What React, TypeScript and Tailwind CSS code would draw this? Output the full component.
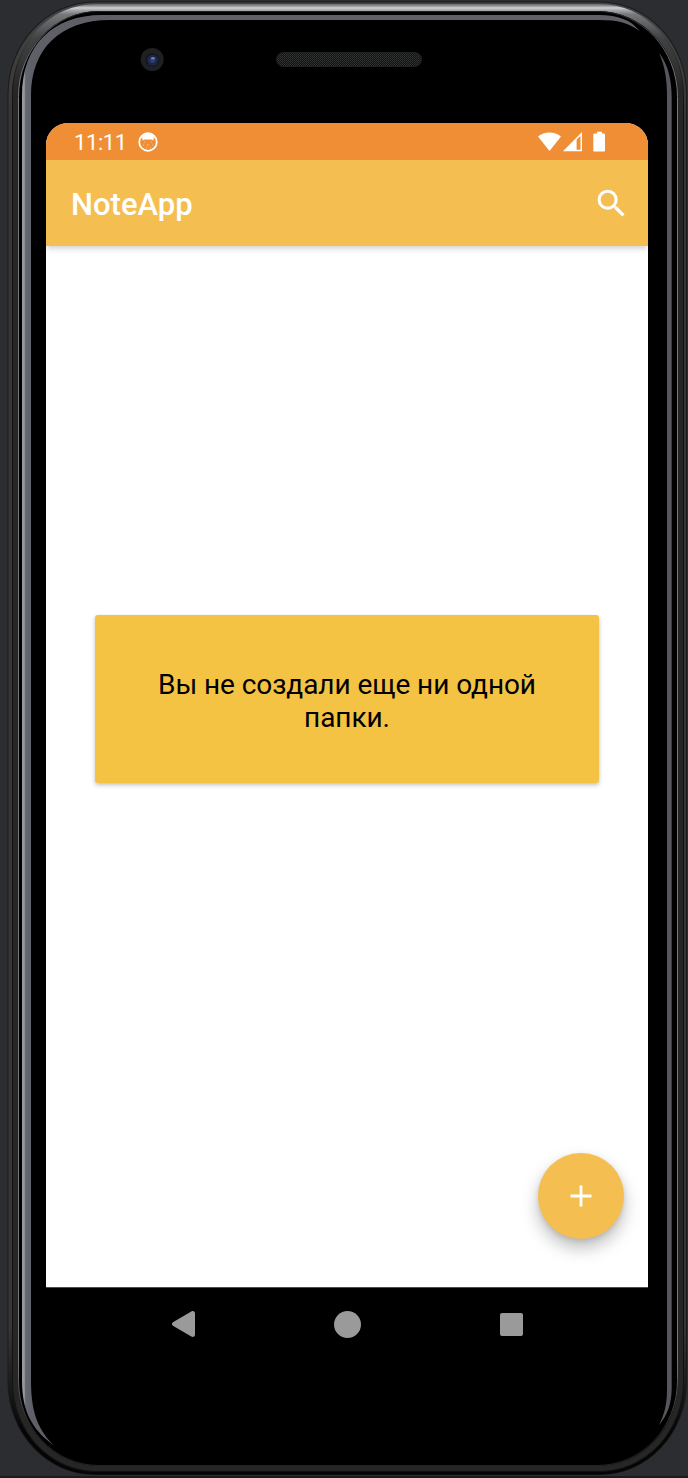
import React from "react";

function PhoneFrame() {
  return (
    <svg className="absolute inset-0 h-[1478px] w-[688px]" viewBox="0 0 688 1478" fill="none" aria-hidden="true">
      <defs>
        <linearGradient id="rim" gradientUnits="userSpaceOnUse" x1="0" y1="4" x2="0" y2="90">
          <stop offset="0" stopColor="#66676a" />
          <stop offset="0.025" stopColor="#98999c" />
          <stop offset="0.045" stopColor="#d0d1d5" />
          <stop offset="0.07" stopColor="#a9aaad" />
          <stop offset="0.12" stopColor="#77787c" />
          <stop offset="0.4" stopColor="#414244" />
          <stop offset="1" stopColor="#262626" />
        </linearGradient>
        <linearGradient id="glass" gradientUnits="userSpaceOnUse" x1="22" y1="0" x2="31" y2="0">
          <stop offset="0" stopColor="#96989c" />
          <stop offset="0.25" stopColor="#96989c" />
          <stop offset="0.4" stopColor="#636771" />
          <stop offset="0.85" stopColor="#5f636d" />
          <stop offset="1" stopColor="#5f5f67" />
        </linearGradient>
        <linearGradient id="line" gradientUnits="userSpaceOnUse" x1="0" y1="12" x2="0" y2="1460">
          <stop offset="0" stopColor="#1c1c1c" />
          <stop offset="0.012" stopColor="#4a4a4c" />
          <stop offset="0.04" stopColor="#77787a" />
          <stop offset="0.93" stopColor="#77787a" />
          <stop offset="0.98" stopColor="#242424" />
        </linearGradient>
        <linearGradient id="edge" gradientUnits="userSpaceOnUse" x1="0" y1="0" x2="0" y2="1475">
          <stop offset="0" stopColor="#454545" />
          <stop offset="0.08" stopColor="#393736" />
          <stop offset="0.9" stopColor="#393736" />
          <stop offset="0.97" stopColor="#050505" />
        </linearGradient>
        <linearGradient id="groove" gradientUnits="userSpaceOnUse" x1="0" y1="30" x2="0" y2="110">
          <stop offset="0" stopColor="#111" stopOpacity="0" />
          <stop offset="1" stopColor="#111" />
        </linearGradient>
      </defs>
      <rect x="0" y="1476" width="688" height="2" fill="#1b1c20" />
      <rect x="7.5" y="1.5" width="679.5" height="1473.5" rx="87" ry="93" fill="#1a1a1a" />
      <rect x="8.5" y="2.5" width="677.5" height="1472" rx="86" ry="92" fill="url(#edge)" />
      <rect x="12" y="4" width="671.5" height="1467.5" rx="84" ry="90" fill="url(#rim)" />
      <rect x="12.5" y="4.5" width="671" height="1467" rx="84" ry="90" stroke="url(#groove)" />
      <rect x="18.5" y="11" width="659.5" height="1455" rx="80" ry="85" fill="#000" />
      <rect x="18.5" y="11.5" width="659" height="1454" rx="80" ry="85" stroke="url(#line)" />
      <path d="M53.5 1445C31 1429 22 1410 22 1380V96C22 45 53 15 102 15H599C618 15 631 20 639.5 31C629 23 618 20 599 20H110C60 20 31 49 31 96V1380C31 1408 36 1428 53.5 1445Z" fill="url(#glass)" />
      <path d="M659 53C668 64 671.7 80 671.7 98V1388C671.7 1404 667 1416 659 1425C664 1415 667 1405 667 1390V96C667 80 665 66 659 53Z" fill="#56565c" />
    </svg>
  );
}

function Bezel() {
  return (
    <div className="relative h-[123px] w-full">
      <svg className="absolute left-[140px] top-[47px] h-6 w-6" viewBox="0 0 24 24">
        <circle cx="12.2" cy="12.5" r="11.5" fill="#202022" />
        <circle cx="12.5" cy="13" r="6.8" fill="#101320" />
        <circle cx="12.7" cy="13.2" r="5.8" fill="#1d2545" />
        <circle cx="12.5" cy="13" r="3" fill="#2c3d74" />
        <ellipse cx="13" cy="11.2" rx="1.8" ry="1.3" fill="#7581a0" />
      </svg>
      <svg className="absolute left-[276px] top-[52px] h-[15px] w-[146px]" viewBox="0 0 146 15">
        <defs>
          <pattern id="mesh" width="2" height="2" patternUnits="userSpaceOnUse">
            <rect width="2" height="2" fill="#131313" />
            <rect width="1" height="1" fill="#333434" />
            <rect x="1" y="1" width="1" height="1" fill="#2b2c2c" />
          </pattern>
        </defs>
        <rect x="0.5" y="0.5" width="145" height="14" rx="7" fill="url(#mesh)" stroke="#202122" />
      </svg>
    </div>
  );
}

function StatusBar() {
  return (
    <div className="flex h-[37px] shrink-0 items-center bg-[#f08e35] pl-[28px] text-white">
      <span className="w-[64px] pt-[2px] text-[22px] leading-none tracking-[-0.4px]">11:11</span>
      <svg className="h-5 w-5" viewBox="0 0 20 20">
        <circle cx="10" cy="10" r="8.8" fill="none" stroke="#fff" strokeWidth="1.7" />
        <path d="M2.5 7C4 3 7 1.5 10 1.5S16 3 17.5 7L15.5 5.5V8.5L13.5 7.5H6.5L4.5 8.5V5.5Z" fill="#fff" />
        <path d="M6 10h1M13 10h1M9 13h2M5 13h1M14 13h1M8 16h1M12 16h1" stroke="#f8c391" strokeWidth="1" />
      </svg>
      <svg className="ml-[379px] h-[22px] w-[70px]" viewBox="0 0 70 22" fill="#fff">
        <path d="M1 5.5C7.5 0.3 17.5 0.3 24 5.5L12.5 20Z" />
        <path d="M26 20.2L45 1V20.2ZM39.6 8.6V18.7H43.5V5Z" fillRule="evenodd" />
        <path d="M60 0.8h5v1.8h1.8c.7 0 1.2.5 1.2 1.2v15.6c0 .7-.5 1.2-1.2 1.2h-9.3c-.7 0-1.2-.5-1.2-1.2V3.8c0-.7.5-1.2 1.2-1.2h2.5Z" />
      </svg>
    </div>
  );
}

export default function App() {
  return (
    <div className="relative h-[1478px] w-[688px] overflow-hidden bg-[#2c2d31] font-['Roboto',sans-serif]">
      <PhoneFrame />
      <Bezel />
      <main className="relative ml-[46px] flex h-[1237px] w-[602px] flex-col overflow-hidden rounded-t-[22px] bg-white">
        <StatusBar />
        <header className="flex h-[86px] shrink-0 items-center justify-between bg-[#f4be50] pl-[25px] pr-[18px] text-white shadow-[0_4px_5px_-1px_rgba(0,0,0,0.16)]">
          <h1 className="pt-[3px] text-[31px] font-medium leading-none">NoteApp</h1>
          <svg className="h-[37px] w-[37px]" viewBox="0 0 24 24" fill="#fff">
            <path d="M15.5 14h-.79l-.28-.27A6.47 6.47 0 0 0 16 9.5 6.5 6.5 0 1 0 9.5 16c1.61 0 3.09-.59 4.23-1.57l.27.28v.79l5 4.99L20.49 19l-4.99-5zm-6 0C7.01 14 5 11.99 5 9.5S7.01 5 9.5 5 14 7.01 14 9.5 11.99 14 9.5 14z" />
          </svg>
        </header>
        <section className="flex h-[1041px] shrink-0 flex-col items-center pt-[369px]">
          <div className="flex h-[168px] w-[504px] items-center justify-center rounded-[3px] bg-[#f4c343] text-center text-[28px] leading-[33px] tracking-[-0.07px] text-black shadow-[0_2px_4px_rgba(0,0,0,0.25)]">
            <p className="pt-[3px]">
              Вы не создали еще ни одной
              <br />
              папки.
            </p>
          </div>
          <button aria-label="+" className="mr-[24.5px] mt-[369.5px] flex h-[86px] w-[86px] items-center justify-center self-end rounded-full bg-[#f4be50] shadow-[0_9px_17px_rgba(0,0,0,0.26),0_2px_5px_rgba(0,0,0,0.1)]">
            <svg className="h-[22px] w-[22px]" viewBox="0 0 22 22">
              <path d="M11 0.5v21M0.5 11h21" stroke="#fff" strokeWidth="2.8" />
            </svg>
          </button>
        </section>
        <nav className="flex h-[73px] items-center border-t border-[#4d4d4d] bg-black pl-[125px]">
          <svg className="h-[26px] w-[25px]" viewBox="0 0 25 26">
            <path d="M2.3 11.1L20.3.5C22.3-.5 24 .4 24 2.5V23.5C24 25.6 22.3 26.5 20.3 25.5L2.3 14.9C.4 13.8.4 12.2 2.3 11.1Z" fill="#9a9a9a" />
          </svg>
          <span className="ml-[137.5px] h-[27px] w-[27px] rounded-full bg-[#9a9a9a]" />
          <span className="ml-[139.5px] h-[23px] w-[23px] rounded-[2px] bg-[#9a9a9a]" />
        </nav>
      </main>
    </div>
  );
}
